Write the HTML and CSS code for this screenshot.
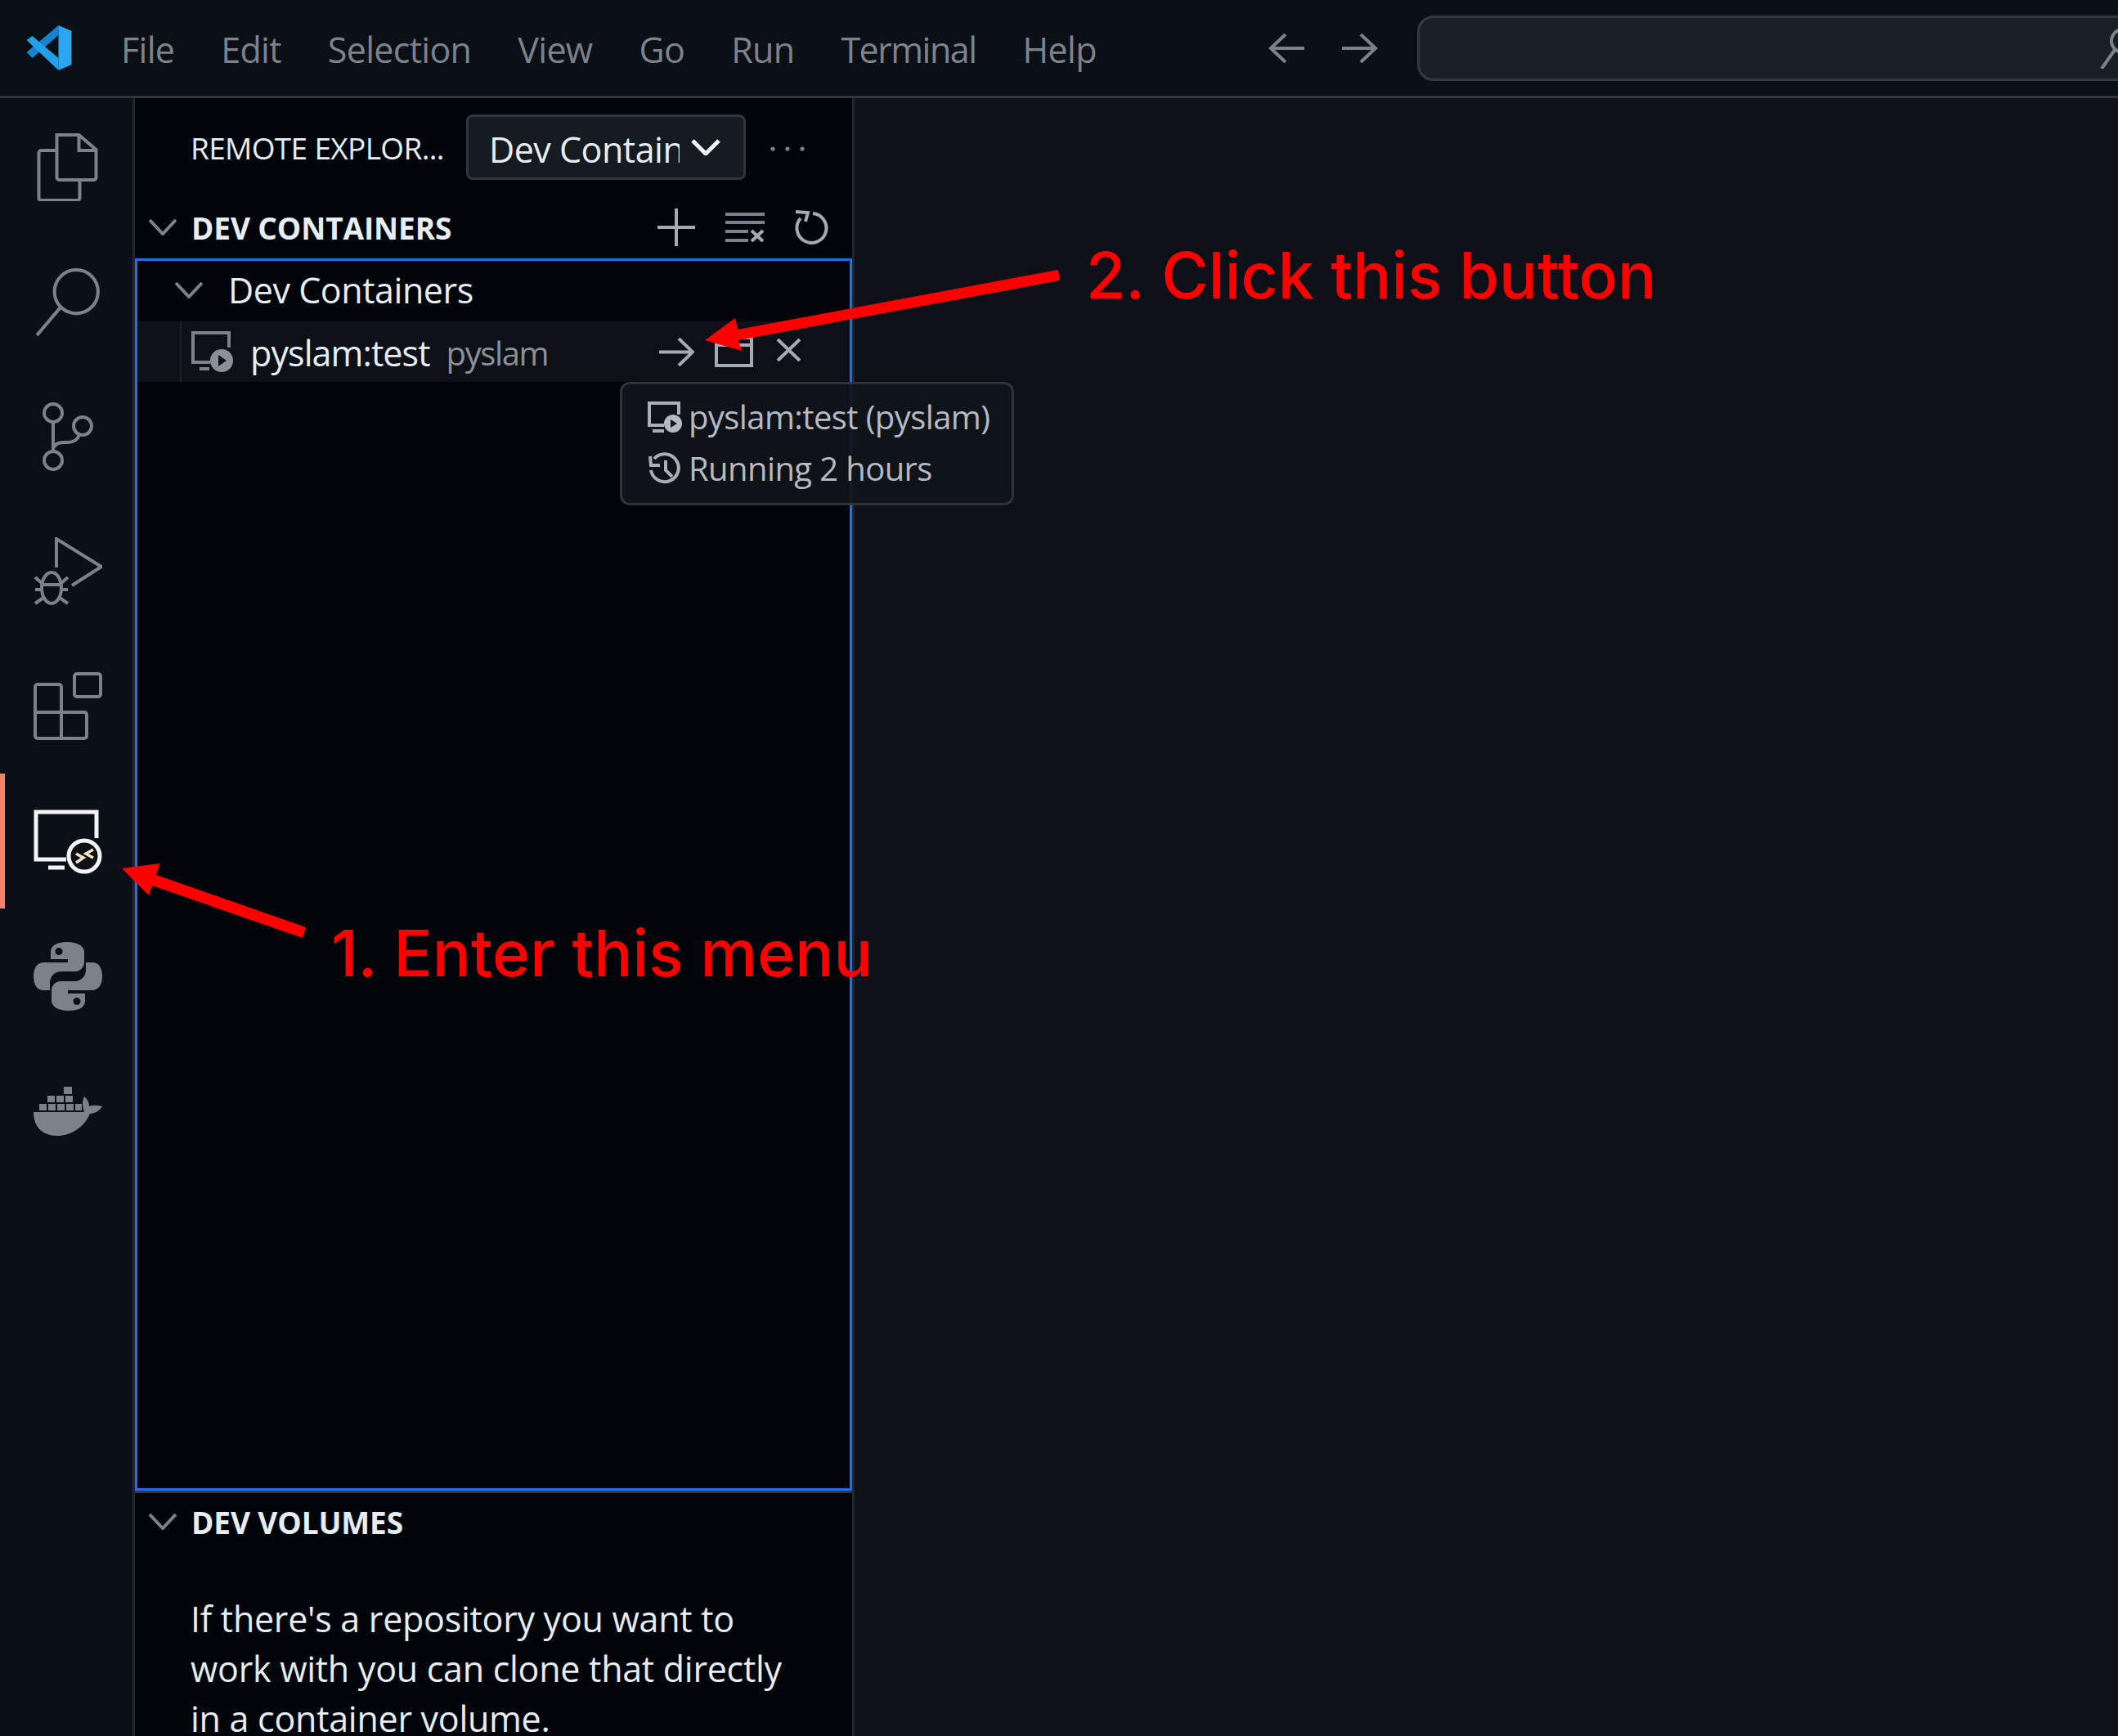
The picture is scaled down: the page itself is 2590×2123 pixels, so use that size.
FILE: index.html
```html
<!DOCTYPE html>
<html lang="en">
<head>
  <meta charset="UTF-8">
  <title>Remote Explorer</title>
  <link rel="stylesheet" href="styles.css">
</head>
<body>
  <div class="titlebar">
    <svg class="logo" viewBox="8 10 56 56"><path d="M47 10L8 43l7 7 32-28z" fill="#1583cf"/><path d="M15 23l-7 5 39 37V50z" fill="#23a0e8"/><path d="M47 10l16 7v41l-16 7z" fill="#2ba6ee"/></svg>
    <nav class="menu">
      <span>File</span><span>Edit</span><span>Selection</span><span>View</span><span>Go</span><span>Run</span><span class="menu-tight">Terminal</span><span>Help</span>
    </nav>
    <div class="nav-arrows">
      <svg viewBox="0 0 44 36"><path d="M21 1L3 18l18 17M3 18h41" class="line"/></svg>
      <svg viewBox="0 0 44 36"><path d="M23 1l18 17-18 17M41 18H0" class="line"/></svg>
    </div>
    <div class="searchbox">
      <svg viewBox="0 0 70 50"><circle cx="30" cy="16" r="14" class="line"/><path d="M20 27L4 50" class="line"/></svg>
    </div>
  </div>

  <div class="main">
    <div class="activitybar">
      <div class="act"><svg viewBox="0 0 75 84"><path class="line" d="M24 3h27l21 18v34a3 3 0 0 1-3 3H27a3 3 0 0 1-3-3zM51 3v19h21M24 22H5a3 3 0 0 0-3 3v55a3 3 0 0 0 3 3h44a3 3 0 0 0 3-3V58"/></svg></div>
      <div class="act"><svg viewBox="0 0 78 82"><circle class="line" cx="49" cy="29" r="26"/><path class="line" d="M30 48L2 81"/></svg></div>
      <div class="act"><svg viewBox="0 0 64 84"><circle class="line" cx="14" cy="13" r="11"/><circle class="line" cx="14" cy="71" r="11"/><circle class="line" cx="50" cy="29" r="11"/><path class="line" d="M14 24v36M14 56c4-8 12-7 18-7 8 0 12-4 14-9"/></svg></div>
      <div class="act"><svg viewBox="10 16 84 84"><path class="line" d="M38 53V18l55 34-36 23"/><ellipse class="line" cx="32" cy="78" rx="12" ry="19"/><path class="line" d="M20 74h24M12 65l8 7M52 65l-8 7M12 80h8M52 80h-8M12 97l10-7M52 97l-10-7"/></svg></div>
      <div class="act"><svg viewBox="0 0 84 84"><path class="line" d="M5 15h26a3 3 0 0 1 3 3v63H5a3 3 0 0 1-3-3V18a3 3 0 0 1 3-3zM2 49h60a3 3 0 0 1 3 3v26a3 3 0 0 1-3 3H34"/><rect class="line" x="50" y="2" width="32" height="28" rx="3"/></svg></div>
      <div class="act is-active">
        <svg viewBox="0 0 84 78"><path class="line-on" d="M40 61H3V3h74v32M18 71h20"/><circle class="line-on" cx="62" cy="57" r="19" fill="#0d1117"/><path class="line-thin" d="M52 54l9 5-9 6M73 49l-9 5 9 5"/></svg>
      </div>
      <div class="act"><svg viewBox="0 0 84 84"><path fill="#7c828b" fill-rule="evenodd" d="M41 0c-14 0-20 5-20 12v9h21v4H13C4 25 0 32 0 42s4 17 12 17h8v-9c0-8 6-14 14-14h17c6 0 11-5 11-11V12C62 5 54 0 41 0zM31 7a4 4 0 1 1 0 9 4 4 0 0 1 0-9z"/><path fill="#7c828b" fill-rule="evenodd" d="M43 84c14 0 20-5 20-12v-9H42v-4h29c9 0 13-7 13-17s-4-17-12-17h-8v9c0 8-6 14-14 14H33c-6 0-11 5-11 11v13c0 7 8 12 21 12zm10-7a4 4 0 1 1 0-9 4 4 0 0 1 0 9z"/></svg></div>
      <div class="act"><svg viewBox="0 0 84 60"><path fill="#7c828b" d="M37 0h10v9H37zM17 11h9v8h-9zM28 11h9v8h-9zM39 11h9v8h-9zM7 21h9v8H7zM18 21h9v8h-9zM29 21h9v8h-9zM40 21h9v8h-9zM51 21h8v8h-8zM62 12c4 3 6 7 6 12 5-2 11-1 16 0-3 5-9 9-15 9-7 17-24 27-40 27C10 60 0 48 0 31h62c-2-6-3-13 0-19z"/></svg></div>
    </div>

    <div class="sidebar">
      <div class="sidebar-head">
        <span class="sidebar-title">REMOTE EXPLOR...</span>
        <div class="dropdown">
          <span class="dropdown-text">Dev Containers</span>
          <svg class="drop-chev" viewBox="0 0 36 20"><path class="line-on" d="M2 2l16 16L34 2"/></svg>
        </div>
        <svg class="dots" viewBox="0 0 44 8"><circle cx="4" cy="4" r="2.6"/><circle cx="22" cy="4" r="2.6"/><circle cx="40" cy="4" r="2.6"/></svg>
      </div>

      <div class="section-head">
        <svg class="chev" viewBox="0 0 34 20"><path class="line" d="M1 1l16 17L33 1"/></svg>
        <span class="section-title">DEV CONTAINERS</span>
        <div class="section-actions">
          <svg class="ic-plus" viewBox="0 0 46 46"><path class="line-lt" d="M23 0v46M0 23h46"/></svg>
          <svg class="ic-clear" viewBox="0 0 50 36"><path class="line" d="M1 2h48M1 12h48M1 23h28M1 34h28"/><path class="line-lt" d="M33 22l14 13M47 22L33 35"/></svg>
          <svg class="ic-refresh" viewBox="0 0 42 42"><path class="line-lt" d="M22 4A18 18 0 1 1 7 10M1 2l15 1-3 11"/></svg>
        </div>
      </div>

      <div class="tree">
        <div class="row row-group">
          <svg class="chev" viewBox="0 0 34 20"><path class="line" d="M1 1l16 17L33 1"/></svg>
          <span class="row-label">Dev Containers</span>
        </div>
        <div class="row row-item">
          <span class="guide"></span>
          <svg class="ic-box" viewBox="0 0 52 50"><path class="line" d="M24 38H3V2h44v18M11 46h12"/><circle cx="38" cy="36" r="14" fill="#8a9099"/><path d="M34 29l10 7-10 7z" fill="#0d1117"/></svg>
          <span class="row-label">pyslam:test</span>
          <span class="row-desc">pyslam</span>
          <div class="row-actions">
            <svg class="ic-go" viewBox="0 0 43 35"><path class="line-lt" d="M24 1l17 16.500L24 34M41 17.500H0"/></svg>
            <svg class="ic-win" viewBox="0 0 47 38"><path class="line-lt" d="M2 2h43v34H2zM2 11h43"/></svg>
            <svg class="ic-x" viewBox="0 0 31 28"><path class="line-lt" d="M2 1l27 26M29 1L2 27"/></svg>
          </div>
        </div>
      </div>

      <div class="volumes">
        <div class="volumes-head">
          <svg class="chev" viewBox="0 0 34 20"><path class="line" d="M1 1l16 17L33 1"/></svg>
          <span class="section-title">DEV VOLUMES</span>
        </div>
        <p class="volumes-text">If there's a repository you want to work with you can clone that directly in a container volume.</p>
      </div>
    </div>

    <div class="editor"></div>
  </div>

  <!-- hover card over the tree -->
  <div class="tooltip">
    <div class="tip-row">
      <svg viewBox="0 0 42 38"><path class="line-tip" d="M20 29H2V2h36v14M6 36h14"/><circle cx="31" cy="27" r="11" fill="#b4b9c2"/><path d="M28 22l8 5-8 5z" fill="#10141b"/></svg>
      <span>pyslam:test (pyslam)</span>
    </div>
    <div class="tip-row">
      <svg viewBox="0 0 40 40"><path class="line-tip" d="M7 8a17 17 0 1 1-4 14M2 5l1 11h11M21 10v12l8 8"/></svg>
      <span>Running 2 hours</span>
    </div>
  </div>

  <!-- annotations drawn on top of the screenshot -->
  <svg class="arrows" viewBox="0 0 2590 2123">
    <path d="M1294 330L902 403l-3-14-37 27 45 13-4-13 393-73z" fill="#ff0000"/>
    <path d="M374 1134L191 1070l4-14-46 6 33 33 4-12 184 64z" fill="#ff0000"/>
  </svg>
  <div class="note note-two">2. Click this button</div>
  <div class="note note-one">1. Enter this menu</div>
</body>
</html>
```

FILE: styles.css
```css
* { box-sizing: border-box; }
html, body { margin: 0; height: 100%; }
body { width: 2590px; height: 2123px; overflow: hidden; position: relative; background: #0d1117; color: #e6edf3; font-family: "Open Sans", sans-serif; font-size: 43px; display: flex; flex-direction: column; }

svg { display: block; flex: none; fill: none; }
.line { stroke: #7c828b; stroke-width: 4; fill: none; }
.line-lt { stroke: #a6abb3; stroke-width: 4; fill: none; }
.line-on { stroke: #f2f4f6; stroke-width: 5; }
.line-thin { stroke: #f4e3c4; stroke-width: 3.500; fill: none; }
.line-tip { stroke: #a9aeb7; stroke-width: 4; fill: none; }

/* title bar */
.titlebar { height: 120px; flex: none; display: flex; align-items: center; background: #0b0f16; border-bottom: 3px solid #30363d; padding-left: 32px; }
.logo { width: 57px; height: 56px; margin-right: 59px; }
.menu { display: flex; gap: 57px; color: #7d838c; letter-spacing: -0.700px; padding-top: 3px; }
.menu-tight { letter-spacing: -1.500px; }
.nav-arrows { display: flex; gap: 46px; margin-left: 210px; }
.nav-arrows svg { width: 44px; height: 36px; }
.searchbox { width: 900px; height: 80px; margin-left: 48px; flex: none; background: #1a1e26; border: 3px solid #353a42; border-radius: 20px; display: flex; align-items: center; padding-left: 830px; }
.searchbox svg { width: 70px; height: 50px; }

.main { flex: 1; display: flex; min-height: 0; }

/* activity bar */
.activitybar { width: 165px; flex: none; border-right: 3px solid #22272e; background: #0b0f16; display: flex; flex-direction: column; padding-top: 1px; }
.act { height: 165px; display: flex; align-items: center; justify-content: center; border-left: 6px solid transparent; padding-right: 3px; }
.act svg { width: 84px; height: 84px; }
.act.is-active { border-left-color: #f78166; }

/* side bar */
.sidebar { width: 880px; flex: none; background: #010409; border-right: 3px solid #22272e; display: flex; flex-direction: column; }
.sidebar-head { height: 120px; flex: none; display: flex; align-items: center; padding-left: 68px; }
.sidebar-title { width: 337px; flex: none; font-size: 37px; letter-spacing: -0.650px; color: #e6edf3; white-space: nowrap; }
.dropdown { width: 342px; height: 80px; flex: none; display: flex; align-items: center; padding: 4px 0 0 25px; background: #161b22; border: 3px solid #30363d; border-radius: 8px; }
.dropdown-text { width: 233px; flex: none; overflow: hidden; white-space: nowrap; letter-spacing: -0.500px; }
.drop-chev { width: 36px; height: 20px; margin: -4px 0 0 14px; }
.dots { width: 44px; height: 8px; margin: 3px 0 0 29px; fill: #7c828b; }

.section-head { height: 76px; flex: none; display: flex; align-items: center; padding-left: 17px; }
.chev { width: 34px; height: 20px; }
.section-title { margin-left: 18px; font-size: 37px; font-weight: 700; letter-spacing: -0.100px; }
.section-actions { margin-left: auto; display: flex; align-items: center; gap: 36px; padding-right: 28px; }
.ic-plus { width: 46px; height: 46px; }
.ic-clear { width: 50px; height: 36px; }
.ic-refresh { width: 42px; height: 42px; }

.tree { height: 1507px; flex: none; border: 3px solid #1f6feb; }
.row { height: 74px; display: flex; align-items: center; padding-left: 46px; }
.row-group { padding-bottom: 3px; }
.row-label { margin-left: 31px; letter-spacing: -0.450px; white-space: nowrap; }
.row-item { background: #0d1117; padding-left: 52px; position: relative; }
.guide { width: 2px; height: 100%; background: #1c2128; margin-right: 11px; }
.ic-box { width: 52px; height: 50px; }
.row-item .row-label { margin: 2px 0 0 21px; letter-spacing: -0.900px; }
.row-desc { margin: 2px 0 0 20px; font-size: 40px; color: #8b9098; letter-spacing: -1.400px; }
.row-actions { margin-left: auto; display: flex; gap: 25px; align-items: center; padding: 0 59px 0 0; }
.ic-go { width: 43px; height: 35px; }
.ic-win { width: 47px; height: 38px; }
.ic-x { width: 31px; height: 28px; margin: 0 0 5px 3px; }

.volumes { flex: 1; border-top: 3px solid #30363d; min-height: 0; }
.volumes-head { height: 70px; display: flex; align-items: center; padding-left: 17px; }
.volumes-text { margin: 53px 0 0; padding: 0 54px 0 68px; line-height: 61px; letter-spacing: -0.270px; }

.editor { flex: 1; background: #0d1117; }

/* overlays */
.tooltip { position: absolute; left: 758px; top: 467px; width: 482px; height: 151px; padding: 8px 0 0 31px; background: rgba(16, 20, 27, 0.93); border: 3px solid #2f3338; border-radius: 12px; color: #b4b9c2; font-size: 40px; letter-spacing: -0.600px; }
.tip-row { height: 63px; display: flex; align-items: center; gap: 8px; white-space: nowrap; }
.tip-row svg { width: 42px; height: 40px; }

.arrows { position: absolute; left: 0; top: 0; width: 2590px; height: 2123px; pointer-events: none; }
.note { position: absolute; color: #ff0000; font-family: Inter, sans-serif; font-weight: 500; font-size: 78.500px; line-height: 100px; white-space: nowrap; }
.note-two { left: 1328px; top: 287px; }
.note-one { left: 405px; top: 1116px; }
```
